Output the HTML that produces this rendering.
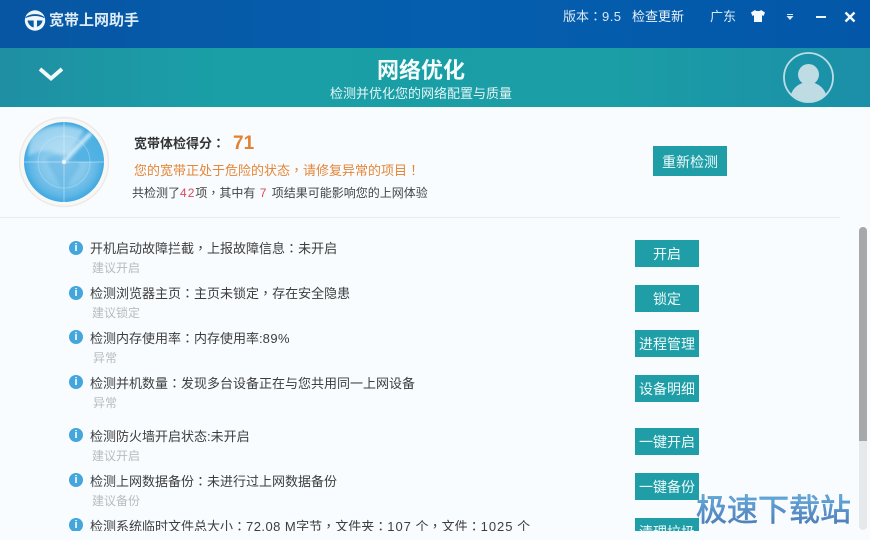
<!DOCTYPE html>
<html><head><meta charset="utf-8">
<style>
html,body{margin:0;padding:0;width:870px;height:540px;overflow:hidden;background:#f8fcff}
body{font-family:"Liberation Sans","Noto Sans CJK SC",sans-serif;position:relative;color:#333}
.a{position:absolute;white-space:nowrap;line-height:16px}
.bar{position:absolute;left:0;top:0;width:870px;height:48px;background:linear-gradient(90deg,#0756a3,#055fae 50%,#0457a8)}
.band{position:absolute;left:0;top:48px;width:870px;height:59px;background:linear-gradient(90deg,#1f8fa3,#1a9fa6 25%,#1b9ea6 70%,#1b8fa8)}
.t{font-size:13px;color:#3d3d3d}
.s{font-size:12px;color:#b8bcbe}
.btn{position:absolute;left:635px;width:64px;height:27px;background:#1f9ea8;color:#eefafa;font-size:14px;line-height:29px;text-align:center;white-space:nowrap;overflow:hidden}
.i{position:absolute;left:69px;width:14px;height:14px;border-radius:50%;background:#45a6dc;color:#fff;font:bold 11px/14px "Liberation Sans",sans-serif;text-align:center}
i{font-style:normal;font-family:"Liberation Sans","Noto Sans CJK TC",sans-serif}
u{text-decoration:none;letter-spacing:.45px}
</style></head><body>
<div class="bar"></div>
<div class="band"></div>

<svg class="a" style="left:24px;top:10px" width="22" height="21" viewBox="0 0 22 21">
<circle cx="11" cy="10.500" r="10.200" fill="#f0f7fb"/>
<path d="M2 6.800C7 3.300 15 3.300 20 6.800L20.600 8.300C15 5.300 7 5.300 1.400 8.300Z" fill="#0a5aa6"/>
<path d="M3.500 10.500H9.700V17.500C6.500 16.800 4.200 14 3.500 10.500Z" fill="#0a5aa6"/>
<path d="M13 10.500H18.500C18 13.500 16 15.800 13 16.800Z" fill="#0a5aa6"/>
</svg>
<div class="a" style="left:49px;top:12px;font-size:15px;font-weight:bold;color:#dfecf6;line-height:18px">宽带上网助手</div>

<div class="a" style="left:563px;top:9px;font-size:13px;color:#d9e8f4">版本<i>：</i><u>9.5</u></div>
<div class="a" style="left:632px;top:9px;font-size:13px;color:#eaf3fa">检查更新</div>
<div class="a" style="left:710px;top:9px;font-size:13px;color:#d9e8f4">广东</div>
<svg class="a" style="left:750px;top:9px" width="16" height="14" viewBox="0 0 16 14"><path d="M5 1L1 3.500 2.500 7 4 6.300V13H12V6.300L13.500 7 15 3.500 11 1C10 2.500 6 2.500 5 1Z" fill="#f4fafd"/></svg>
<svg class="a" style="left:785px;top:12px" width="10" height="9" viewBox="0 0 10 9"><path d="M2 2H8V3H2ZM1.500 4H8.500L5 8Z" fill="#dbe9f4"/></svg>
<div class="a" style="left:816px;top:16px;width:10px;height:2px;background:#eef6fb"></div>
<svg class="a" style="left:844px;top:11px" width="12" height="12" viewBox="0 0 12 12"><path d="M1.500 1.500L10.500 10.500M10.500 1.500L1.500 10.500" stroke="#f2f8fc" stroke-width="2.400"/></svg>

<svg class="a" style="left:38px;top:66px" width="26" height="16" viewBox="0 0 26 16"><path d="M2 3L13 12.500L24 3" fill="none" stroke="#f2fafb" stroke-width="3.800"/></svg>
<div class="a" style="left:377px;top:58px;font-size:22px;font-weight:bold;color:#f5fcfc;line-height:26px">网络优化</div>
<div class="a" style="left:330px;top:86px;font-size:13px;color:#e3f4f5">检测并优化您的网络配置与质量</div>

<svg class="a" style="left:782px;top:52px" width="53" height="53" viewBox="0 0 53 53">
<defs><clipPath id="c"><circle cx="26.500" cy="25.500" r="24"/></clipPath></defs>
<circle cx="26.500" cy="25.500" r="24.500" fill="none" stroke="#bcdde4" stroke-width="1.800"/>
<g clip-path="url(#c)" fill="#bfdbe3"><circle cx="26.500" cy="22.500" r="10.500"/><ellipse cx="26.500" cy="48" rx="18.500" ry="18"/></g>
</svg>

<!-- radar -->
<svg class="a" style="left:18px;top:116px" width="92" height="92" viewBox="0 0 92 92">
<defs>
<radialGradient id="r" cx="50%" cy="50%" r="50%"><stop offset="0" stop-color="#a6d8f1"/><stop offset=".55" stop-color="#84c8ec"/><stop offset=".85" stop-color="#5eb6e6"/><stop offset="1" stop-color="#3fa8e0"/></radialGradient>
<clipPath id="rc"><circle cx="46" cy="46" r="40"/></clipPath>
<filter id="bl"><feGaussianBlur stdDeviation="1.600"/></filter>
</defs>
<circle cx="46" cy="46" r="44.500" fill="#f7f7f6" stroke="#eeeae7" stroke-width="1.500"/>
<circle cx="46" cy="46" r="40" fill="url(#r)"/>
<g clip-path="url(#rc)">
<path d="M46 46L74 15A44 44 0 0 1 88 46Z" fill="#4fb0e2" opacity=".9"/>
<path d="M12 22C20 10 44 6 66 14L46 46C36 30 24 34 10 40Z" fill="#c4e4f5" opacity=".6" filter="url(#bl)"/>
<path d="M28 42C40 36 58 38 62 48C60 58 52 60 47 76C40 66 32 54 28 42Z" fill="#5eb3e4" opacity=".6" filter="url(#bl)"/>
<circle cx="46" cy="46" r="26" fill="none" stroke="#d3ebf8" stroke-width="1" opacity=".35"/>
<path d="M6 46H86M46 6V86" stroke="#e6f4fb" stroke-width=".7" opacity=".65"/>
<path d="M46 46L73 17" stroke="#e6f5fc" stroke-width="3" filter="url(#bl)"/>
</g>
<circle cx="46" cy="46" r="2" fill="#eef8fd"/>
</svg>

<div class="a" style="left:134px;top:136px;font-size:13px;font-weight:bold;color:#333">宽带体检得分<i>：</i></div>
<div class="a" style="left:233px;top:134px;font-size:19px;font-weight:bold;color:#e4812f;line-height:20px">71</div>
<div class="a" style="left:134px;top:163px;font-size:13px;color:#e58638">您的宽带正处于危险的状态<i>，</i>请修复异常的项目<i>！</i></div>
<div class="a" style="left:132px;top:185px;font-size:12px;color:#444">共检测了<span style="color:#d9485a;letter-spacing:1px">42</span>项<i>，</i>其中有 <span style="color:#d9485a;margin:0 2px 0 1px">7</span> 项结果可能影响您的上网体验</div>
<div class="btn" style="left:653px;top:146px;width:74px;height:30px;line-height:32px">重新检测</div>
<div class="a" style="left:0;top:217px;width:840px;height:1px;background:#e6ebef"></div>

<div class="i" style="top:241px">i</div>
<div class="a t" style="left:90px;top:241px">开机启动故障拦截<i>，</i>上报故障信息<i>：</i>未开启</div>
<div class="a s" style="left:92px;top:260px">建议开启</div>
<div class="btn" style="top:240px">开启</div>

<div class="i" style="top:286px">i</div>
<div class="a t" style="left:90px;top:286px">检测浏览器主页<i>：</i>主页未锁定<i>，</i>存在安全隐患</div>
<div class="a s" style="left:92px;top:305px">建议锁定</div>
<div class="btn" style="top:285px">锁定</div>

<div class="i" style="top:330px">i</div>
<div class="a t" style="left:90px;top:331px">检测内存使用率<i>：</i>内存使用率:<u>89%</u></div>
<div class="a s" style="left:93px;top:350px">异常</div>
<div class="btn" style="top:330px">进程管理</div>

<div class="i" style="top:375px">i</div>
<div class="a t" style="left:90px;top:376px">检测并机数量<i>：</i>发现多台设备正在与您共用同一上网设备</div>
<div class="a s" style="left:93px;top:395px">异常</div>
<div class="btn" style="top:375px">设备明细</div>

<div class="i" style="top:428px">i</div>
<div class="a t" style="left:90px;top:429px">检测防火墙开启状态:未开启</div>
<div class="a s" style="left:92px;top:448px">建议开启</div>
<div class="btn" style="top:428px">一键开启</div>

<div class="i" style="top:473px">i</div>
<div class="a t" style="left:90px;top:474px">检测上网数据备份<i>：</i>未进行过上网数据备份</div>
<div class="a s" style="left:92px;top:493px">建议备份</div>
<div class="btn" style="top:473px">一键备份</div>

<div style="position:absolute;left:0;top:500px;width:850px;height:31px;overflow:hidden">
<div class="i" style="top:18px">i</div>
<div class="a t" style="left:90px;top:19px">检测系统临时文件总大小<i>：</i><u>72.08 M</u>字节<i>，</i>文件夹<i>：</i><u style="letter-spacing:1px">107</u> 个<i>，</i>文件<i>：</i><u style="letter-spacing:1px">1025</u> 个</div>
<div class="btn" style="top:18px">清理垃圾</div>
</div>

<div class="a" style="left:859px;top:227px;width:8px;height:303px;background:#e6e9ec;border-radius:4px"></div>
<div class="a" style="left:859px;top:227px;width:8px;height:214px;background:#a6a8aa;border-radius:4px 4px 0 0"></div>

<div class="a" style="left:696px;top:492px;font-size:31px;line-height:38px;color:#4f90c4;-webkit-text-stroke:.5px #5a90c6;background:linear-gradient(180deg,#62b4e2,#4f6fae);-webkit-background-clip:text;background-clip:text;-webkit-text-fill-color:transparent">极速下载站</div>
</body></html>
